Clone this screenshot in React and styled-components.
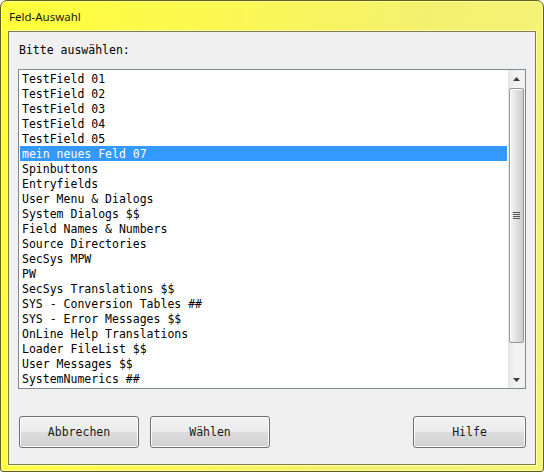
import React from "react";
import styled, {createGlobalStyle} from "styled-components";

const GlobalStyle = createGlobalStyle`
  html, body {
    margin: 0;
    padding: 0;
    background: #ffffff;
  }
`

const MONO = `"DejaVu Sans Mono", "Liberation Mono", monospace`;

const Window = styled.div`
  box-sizing: border-box;
  width: 544px;
  height: 472px;
  display: flex;
  flex-direction: column;
  padding: 0 7px 6px 7px;
  border: 1px solid #5f5f18;
  border-radius: 7px 7px 3px 3px;
  background: linear-gradient(100deg, #ffff38 0%, #fbf852 35%, #f4f070 70%, #f6f37a 100%);
  box-shadow: inset 0 0 0 1px #fdfd9a;
`

const TitleBar = styled.div`
  height: 30px;
  display: flex;
  align-items: center;
  padding-left: 1px;
  font-family: "Noto Sans", "Open Sans", sans-serif;
  font-size: 11.5px;
  color: #1a1a1a;
`

const Client = styled.div`
  flex: 1;
  display: flex;
  flex-direction: column;
  background: #f0f0f0;
  border: 1px solid #7c7c4c;
  box-shadow: 0 0 0 1px #ffffa8;
  padding: 0 9px 0 9px;
`

const Label = styled.div`
  height: 37px;
  display: flex;
  align-items: center;
  padding-left: 1px;
  padding-bottom: 2px;
  box-sizing: border-box;
  font-family: ${MONO};
  font-size: 11.5px;
  color: #000;
`

const ListBox = styled.div`
  height: 318px;
  display: flex;
  border: 1px solid #828790;
  background: #ffffff;
`

const Rows = styled.div`
  flex: 1;
  padding: 1px 1px 0 1px;
`

const Row = styled.div`
  box-sizing: border-box;
  height: 15px;
  line-height: 14px;
  padding: 1px 0 0 2px;
  font-family: ${MONO};
  font-size: 11.5px;
  white-space: pre;
  color: ${props => props.selected ? '#ffffff' : '#000000'};
  background: ${props => props.selected ? '#3399ff' : 'transparent'};
`

const ScrollBar = styled.div`
  width: 17px;
  display: flex;
  flex-direction: column;
  background: linear-gradient(to right, #e6e6e6, #f2f2f2 40%, #f2f2f2);
`

const ArrowButton = styled.div`
  height: 17px;
  display: flex;
  align-items: center;
  justify-content: center;
`

const Thumb = styled.div`
  box-sizing: border-box;
  height: 255px;
  margin: 1px 1px 0 1px;
  border: 1px solid #979797;
  border-radius: 2px;
  display: flex;
  align-items: center;
  justify-content: center;
  background: linear-gradient(to right, #f4f4f4 0%, #e9e9e9 30%, #dcdcdc 60%, #cdcdcd 100%);
  box-shadow: inset 1px 1px 0 #ffffff;
`

const Track = styled.div`
  flex: 1;
`

const Grip = () => (
    <svg width="7" height="8" viewBox="0 0 7 8">
        {[0, 2, 4, 6].map(y => <rect key={y} x="0" y={y} width="7" height="1" fill="#555"/>)}
    </svg>
)

const Arrow = ({up}) => (
    <svg width="7" height="4" viewBox="0 0 7 4">
        <path d={up ? "M3.5 0 L7 4 L0 4 Z" : "M0 0 L7 0 L3.5 4 Z"} fill="#3c3c3c"/>
    </svg>
)

const ButtonRow = styled.div`
  display: flex;
  margin-top: 27px;
  padding-left: 1px;
`

const Button = styled.div`
  box-sizing: border-box;
  width: ${props => props.width}px;
  height: 32px;
  margin-right: ${props => props.gap || 0}px;
  display: flex;
  align-items: center;
  justify-content: center;
  border: 1px solid #707070;
  border-radius: 3px;
  background: linear-gradient(to bottom, #f2f2f2 0%, #ebebeb 50%, #dddddd 51%, #cfcfcf 100%);
  box-shadow: inset 0 0 0 1px #fbfbfb;
  font-family: ${MONO};
  font-size: 11.5px;
  color: #1a1a1a;
`

const Spacer = styled.div`
  flex: 1;
`

const items = [
    'TestField 01',
    'TestField 02',
    'TestField 03',
    'TestField 04',
    'TestField 05',
    'mein neues Feld 07',
    'Spinbuttons',
    'Entryfields',
    'User Menu & Dialogs',
    'System Dialogs $$',
    'Field Names & Numbers',
    'Source Directories',
    'SecSys MPW',
    'PW',
    'SecSys Translations $$',
    'SYS - Conversion Tables ##',
    'SYS - Error Messages $$',
    'OnLine Help Translations',
    'Loader FileList $$',
    'User Messages $$',
    'SystemNumerics ##',
];

export default function App() {
    return (
        <React.Fragment>
            <GlobalStyle/>
            <Window>
                <TitleBar>Feld-Auswahl</TitleBar>
                <Client>
                    <Label>Bitte auswählen:</Label>
                    <ListBox>
                        <Rows>
                            {items.map((it, i) => <Row key={i} selected={i === 5}>{it}</Row>)}
                        </Rows>
                        <ScrollBar>
                            <ArrowButton><Arrow up/></ArrowButton>
                            <Thumb><Grip/></Thumb>
                            <Track/>
                            <ArrowButton><Arrow/></ArrowButton>
                        </ScrollBar>
                    </ListBox>
                    <ButtonRow>
                        <Button width={120} gap={11}>Abbrechen</Button>
                        <Button width={120}>Wählen</Button>
                        <Spacer/>
                        <Button width={113}>Hilfe</Button>
                    </ButtonRow>
                </Client>
            </Window>
        </React.Fragment>
    )
}
